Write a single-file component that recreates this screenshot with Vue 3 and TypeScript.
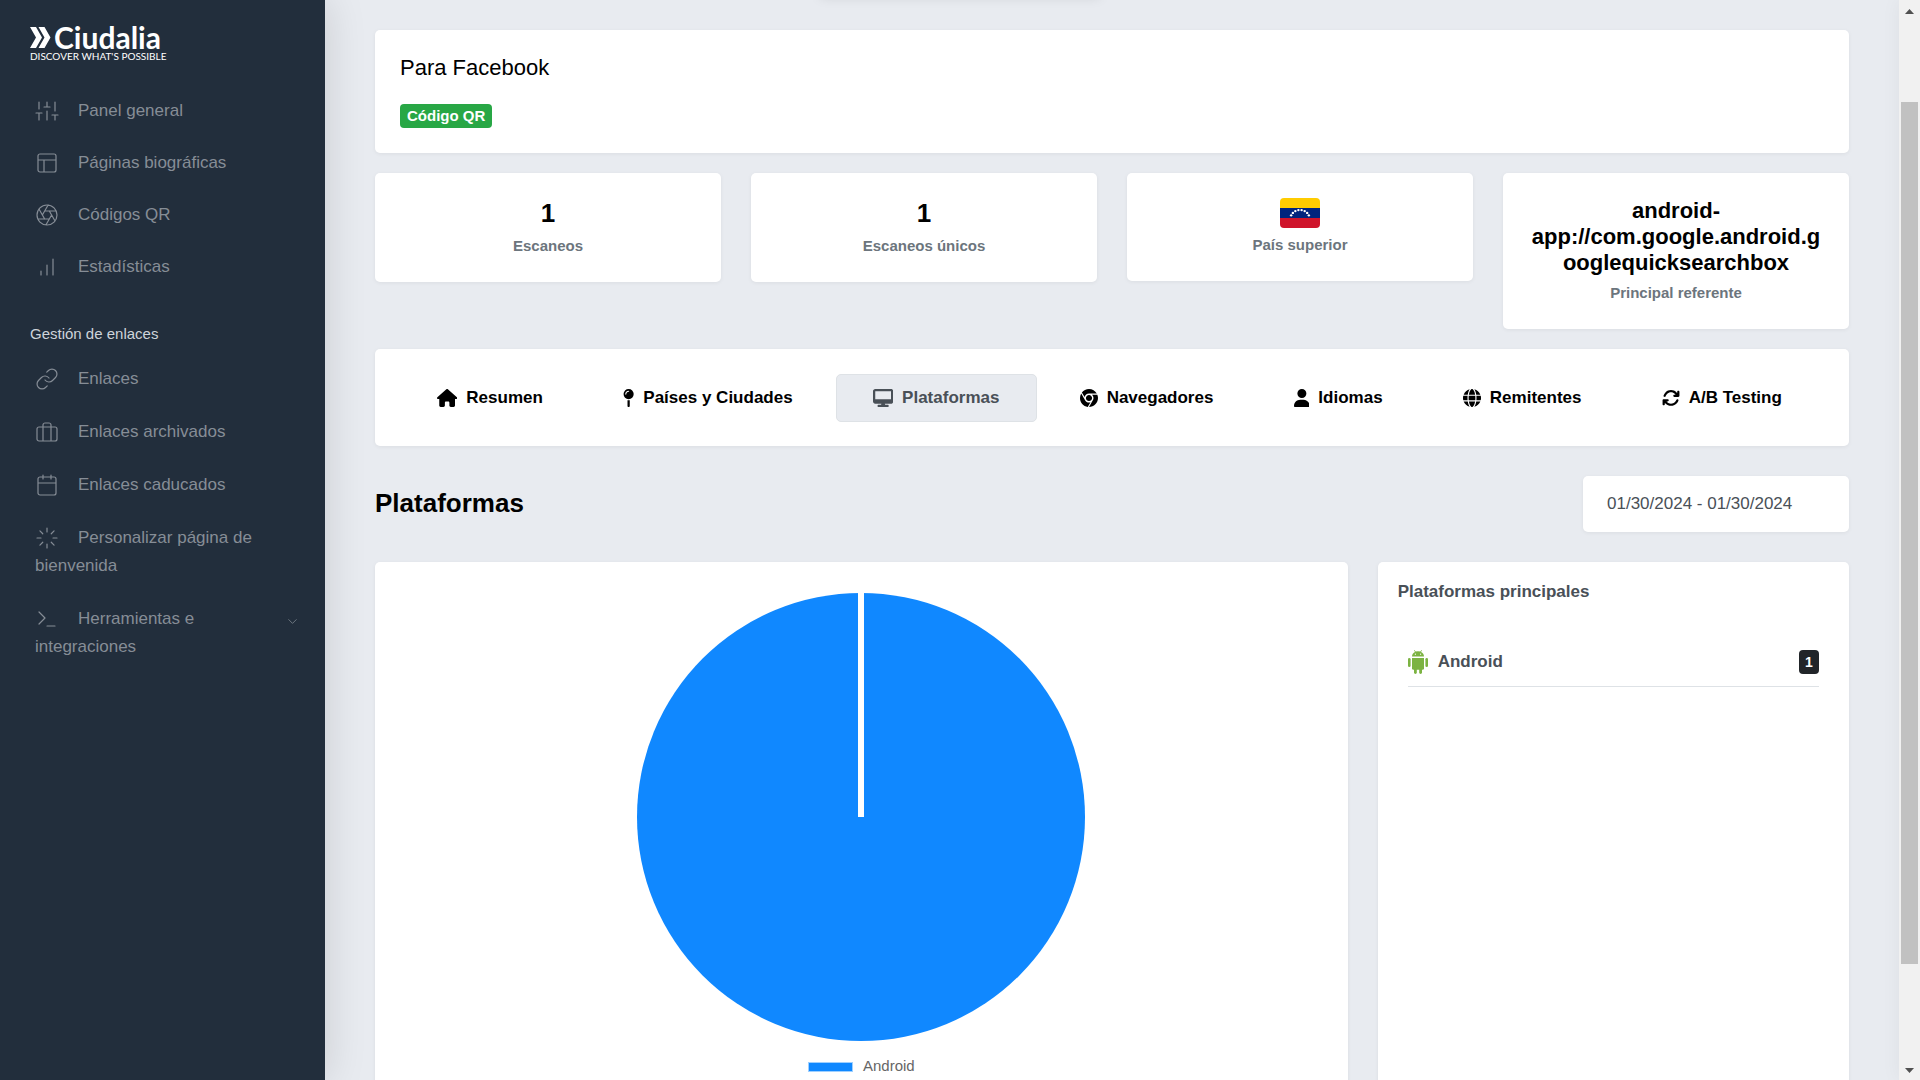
<script setup lang="ts">
import { ref } from 'vue'

interface NavLink {
  label: string
  icon: string
  expandable?: boolean
}

interface Tab {
  id: string
  label: string
  width: number
  path: string
}

const mainLinks: NavLink[] = [
  { label: 'Panel general', icon: 'M4 21v-7M4 10V3M12 21v-9M12 8V3M20 21v-5M20 12V3M1 14h6M9 8h6M17 16h6' },
  { label: 'Páginas biográficas', icon: 'M5 3h14a2 2 0 0 1 2 2v14a2 2 0 0 1-2 2H5a2 2 0 0 1-2-2V5a2 2 0 0 1 2-2zM3 9h18M9 21V9' },
  { label: 'Códigos QR', icon: 'M12 2a10 10 0 1 0 0 20 10 10 0 0 0 0-20zM14.31 8l5.74 9.94M9.69 8h11.48M7.38 12l5.74-9.94M9.69 16L3.95 6.06M14.31 16H2.83M16.62 12l-5.74 9.94' },
  { label: 'Estadísticas', icon: 'M12 20V10M18 20V4M6 20v-4' },
]

const manageLinks: NavLink[] = [
  { label: 'Enlaces', icon: 'M10 13a5 5 0 0 0 7.54.54l3-3a5 5 0 0 0-7.07-7.07l-1.72 1.71M14 11a5 5 0 0 0-7.54-.54l-3 3a5 5 0 0 0 7.07 7.07l1.71-1.71' },
  { label: 'Enlaces archivados', icon: 'M4 7h16a2 2 0 0 1 2 2v10a2 2 0 0 1-2 2H4a2 2 0 0 1-2-2V9a2 2 0 0 1 2-2zM16 21V5a2 2 0 0 0-2-2h-4a2 2 0 0 0-2 2v16' },
  { label: 'Enlaces caducados', icon: 'M5 4h14a2 2 0 0 1 2 2v14a2 2 0 0 1-2 2H5a2 2 0 0 1-2-2V6a2 2 0 0 1 2-2zM16 2v4M8 2v4M3 10h18' },
  { label: 'Personalizar página de bienvenida', icon: 'M12 2v4M12 18v4M4.93 4.93l2.83 2.83M16.24 16.24l2.83 2.83M2 12h4M18 12h4M4.93 19.07l2.83-2.83M16.24 7.76l2.83-2.83' },
  { label: 'Herramientas e integraciones', icon: 'M4 17l6-6-6-6M12 19h8', expandable: true },
]

const tabs: Tab[] = [
  { id: 'summary', label: 'Resumen', width: 576, path: 'M575.8 255.5c0 18-15 32.1-32 32.1h-32l.7 160.2c0 2.7-.2 5.4-.5 8.1V472c0 22.1-17.9 40-40 40H392c-22.1 0-40-17.9-40-40V384c0-17.7-14.3-32-32-32H256c-17.7 0-32 14.3-32 32v88c0 22.1-17.9 40-40 40H104c-22.1 0-40-17.9-40-40V287.6H32c-18 0-32-14-32-32.1c0-9 3-17 10-24L266.4 8c7-7 15-8 22-8s15 2 21 7L564.8 231.5c8 7 12 15 11 24z' },
  { id: 'places', label: 'Países y Ciudades', width: 320, path: 'M16 144a144 144 0 1 1 288 0A144 144 0 1 1 16 144zM160 80c8.8 0 16-7.2 16-16s-7.2-16-16-16c-53 0-96 43-96 96c0 8.8 7.2 16 16 16s16-7.2 16-16c0-35.3 28.7-64 64-64zM128 480V317.1c10.4 1.9 21.1 2.9 32 2.9s21.6-1 32-2.9V480c0 17.7-14.3 32-32 32s-32-14.3-32-32z' },
  { id: 'platforms', label: 'Plataformas', width: 576, path: 'M64 0C28.7 0 0 28.7 0 64V352c0 35.3 28.7 64 64 64H240l-10.7 32H160c-17.7 0-32 14.3-32 32s14.3 32 32 32H416c17.7 0 32-14.3 32-32s-14.3-32-32-32H346.7L336 416H512c35.3 0 64-28.7 64-64V64c0-35.3-28.7-64-64-64H64zM512 64V288H64V64H512z' },
  { id: 'browsers', label: 'Navegadores', width: 512, path: 'M0 256C0 209.4 12.47 165.6 34.27 127.1L144.1 318.3C166 357.5 207.9 384 256 384C270.3 384 283.1 381.7 296.8 377.4L220.5 509.6C95.9 492.3 0 385.3 0 256zM365.1 321.6C377.4 302.4 384 279.1 384 256C384 217.8 367.2 183.5 340.7 160H493.4C505.4 189.6 512 222.1 512 256C512 397.4 397.4 511.1 256 512L365.1 321.6zM477.8 128H256C193.1 128 142.3 172.1 130.5 230.7L54.19 98.47C101 38.53 174 0 256 0C350.8 0 433.5 51.48 477.8 128V128zM168 256C168 207.4 207.4 168 256 168C304.6 168 344 207.4 344 256C344 304.6 304.6 344 256 344C207.4 344 168 304.6 168 256z' },
  { id: 'languages', label: 'Idiomas', width: 448, path: 'M224 256A128 128 0 1 0 224 0a128 128 0 1 0 0 256zm-45.7 48C79.8 304 0 383.8 0 482.3C0 498.7 13.3 512 29.7 512H418.3c16.4 0 29.7-13.3 29.7-29.7C448 383.8 368.2 304 269.7 304H178.3z' },
  { id: 'referrers', label: 'Remitentes', width: 512, path: 'M352 256c0 22.2-1.2 43.6-3.3 64H163.3c-2.2-20.4-3.3-41.8-3.3-64s1.2-43.6 3.3-64H348.7c2.2 20.4 3.3 41.8 3.3 64zm28.8-64H503.9c5.3 20.5 8.1 41.9 8.1 64s-2.8 43.5-8.1 64H380.8c2.1-20.6 3.2-42 3.2-64s-1.1-43.4-3.2-64zm112.6-32H376.7c-10-63.9-29.8-117.4-55.3-151.6c78.3 20.7 142 77.5 171.9 151.6zm-149.1 0H167.7c6.1-36.4 15.5-68.6 27-94.7c10.5-23.6 22.2-40.7 33.5-51.5C239.4 3.2 248.7 0 256 0s16.6 3.2 27.8 13.8c11.3 10.8 23 27.9 33.5 51.5c11.6 26 20.9 58.2 27 94.7zm-209 0H18.6C48.6 85.9 112.2 29.1 190.6 8.4C165.1 42.6 145.3 96.1 135.3 160zM8.1 192H131.2c-2.1 20.6-3.2 42-3.2 64s1.1 43.4 3.2 64H8.1C2.8 299.5 0 278.1 0 256s2.8-43.5 8.1-64zM194.7 446.6c-11.6-26-20.9-58.2-27-94.6H344.3c-6.1 36.4-15.5 68.6-27 94.6c-10.5 23.6-22.2 40.7-33.5 51.5C272.6 508.8 263.3 512 256 512s-16.6-3.2-27.8-13.8c-11.3-10.8-23-27.9-33.5-51.5zM135.3 352c10 63.9 29.8 117.4 55.3 151.6C112.2 482.9 48.6 426.1 18.6 352H135.3zm358.1 0c-30 74.1-93.6 130.9-171.9 151.6c25.5-34.2 45.2-87.7 55.3-151.6H493.4z' },
  { id: 'ab', label: 'A/B Testing', width: 512, path: 'M105.1 202.6c7.7-21.8 20.2-42.3 37.8-59.8c62.5-62.5 163.8-62.5 226.3 0L386.3 160H352c-17.7 0-32 14.3-32 32s14.3 32 32 32H463.9c17.7 0 32-14.3 32-32V80c0-17.7-14.3-32-32-32s-32 14.3-32 32v35.2L414.4 97.6c-87.5-87.5-229.3-87.5-316.8 0C73.2 122 55.6 150.7 44.8 181.4c-5.9 16.7 2.9 34.9 19.5 40.8s34.9-2.9 40.8-19.5zM39 289.3c-5 1.5-9.8 4.2-13.7 8.2c-4 4-6.7 8.8-8.1 14c-.3 1.2-.6 2.5-.8 3.8c-.3 1.7-.4 3.4-.4 5.1V432c0 17.7 14.3 32 32 32s32-14.3 32-32V396.9l17.6 17.5c87.5 87.4 229.3 87.4 316.7 0c24.4-24.4 42.1-53.1 52.9-83.7c5.9-16.7-2.9-34.9-19.5-40.8s-34.9 2.9-40.8 19.5c-7.7 21.8-20.2 42.3-37.8 59.8c-62.5 62.5-163.8 62.5-226.3 0L125.6 352H160c17.7 0 32-14.3 32-32s-14.3-32-32-32H48.4c-1.6 0-3.2 .1-4.8 .3s-3.1 .5-4.6 1z' },
]

const activeTab = ref('platforms')
const dateRange = ref('01/30/2024 - 01/30/2024')

// Arc of eight stars on the flag's middle band
const stars = Array.from({ length: 8 }, (_, i) => {
  const angle = Math.PI * (0.12 + (0.76 * i) / 7)
  return { x: 20 - 9.5 * Math.cos(angle), y: 20.5 - 8.5 * Math.sin(angle) }
})
</script>

<template>
  <div class="shell">
    <div class="top-bar"></div>

    <nav class="sidebar">
      <a class="brand" href="#">
        <span class="brand-name">
          <svg width="21" height="21" viewBox="0 0 21 21" aria-hidden="true">
            <path d="M0 0h6l6 10.500-6 10.500H0l6-10.500z" fill="#fff" />
            <path d="M8.500 0h6L20.500 10.500l-6 10.500h-6l6-10.500z" fill="#fff" />
          </svg>
          <span>Ciudalia</span>
        </span>
        <span class="brand-tagline">DISCOVER WHAT'S POSSIBLE</span>
      </a>

      <ul class="nav-list">
        <li v-for="link in mainLinks" :key="link.label">
          <a class="nav-link" href="#">
            <span>
              <svg class="nav-icon" viewBox="0 0 24 24" aria-hidden="true"><path :d="link.icon" /></svg>{{ link.label }}
            </span>
          </a>
        </li>
      </ul>

      <h2 class="nav-heading">Gestión de enlaces</h2>

      <ul class="nav-list nav-list-spaced">
        <li v-for="link in manageLinks" :key="link.label">
          <a class="nav-link" href="#">
            <span>
              <svg class="nav-icon" viewBox="0 0 24 24" aria-hidden="true"><path :d="link.icon" /></svg>{{ link.label }}
            </span>
            <svg v-if="link.expandable" class="chevron" viewBox="0 0 24 24" aria-hidden="true"><path d="M6 9l6 6 6-6" /></svg>
          </a>
        </li>
      </ul>
    </nav>

    <main class="content">
      <section class="card intro">
        <h1 class="intro-title">Para Facebook</h1>
        <span class="badge badge-success">Código QR</span>
      </section>

      <section class="stats">
        <div class="card stat">
          <strong class="stat-number">1</strong>
          <span class="stat-label">Escaneos</span>
        </div>
        <div class="card stat">
          <strong class="stat-number">1</strong>
          <span class="stat-label">Escaneos únicos</span>
        </div>
        <div class="card stat">
          <svg class="flag" viewBox="0 0 40 30" role="img" aria-label="Venezuela">
            <rect width="40" height="10" fill="#fc0" />
            <rect y="10" width="40" height="10" fill="#00247d" />
            <rect y="20" width="40" height="10" fill="#cf142b" />
            <circle v-for="(star, i) in stars" :key="i" :cx="star.x" :cy="star.y" r="1.200" fill="#fff" />
          </svg>
          <span class="stat-label">País superior</span>
        </div>
        <div class="card stat">
          <strong class="stat-text">android-app://com.google.android.googlequicksearchbox</strong>
          <span class="stat-label">Principal referente</span>
        </div>
      </section>

      <div class="card tabs" role="tablist">
        <button
          v-for="tab in tabs"
          :key="tab.id"
          class="tab"
          :class="{ active: tab.id === activeTab }"
          type="button"
          role="tab"
          :aria-selected="tab.id === activeTab"
          @click="activeTab = tab.id"
        >
          <svg class="tab-icon" :viewBox="`0 0 ${tab.width} 512`" aria-hidden="true"><path :d="tab.path" /></svg>
          {{ tab.label }}
        </button>
      </div>

      <div class="section-head">
        <h2 class="section-title">Plataformas</h2>
        <input v-model="dateRange" class="date-range" type="text" aria-label="Rango de fechas" />
      </div>

      <section class="panels">
        <div class="card chart-card">
          <svg class="pie" viewBox="0 0 448 448" role="img" aria-label="Android: 1">
            <circle cx="224" cy="224" r="224" fill="#1088ff" />
            <rect x="221" y="0" width="6" height="224" fill="#fff" />
          </svg>
          <div class="legend"><span class="legend-swatch"></span>Android</div>
        </div>

        <div class="card top-card">
          <h3 class="top-title">Plataformas principales</h3>
          <ul class="top-list">
            <li class="top-item">
              <svg class="android" viewBox="0 0 20 24" aria-hidden="true">
                <g fill="#7cb342">
                  <path d="M4 6.500C4 4.300 5.200 2.700 7 1.900L6 .300l.5-.3 1.100 1.600a7 7 0 0 1 4.800 0L13.500 0l.5.300-1 1.600c1.800.8 3 2.400 3 4.600z" />
                  <path d="M4 8h12v10.200a1.500 1.500 0 0 1-1.500 1.500h-9A1.500 1.500 0 0 1 4 18.200z" />
                  <rect x="0" y="8" width="2.600" height="9" rx="1.300" />
                  <rect x="17.400" y="8" width="2.600" height="9" rx="1.300" />
                  <rect x="6" y="16" width="2.800" height="8" rx="1.400" />
                  <rect x="11.200" y="16" width="2.800" height="8" rx="1.400" />
                </g>
                <circle cx="7.400" cy="4.200" r=".6" fill="#fff" />
                <circle cx="12.600" cy="4.200" r=".6" fill="#fff" />
              </svg>
              <span class="top-name">Android</span>
              <span class="badge badge-dark">1</span>
            </li>
          </ul>
        </div>
      </section>
    </main>

    <div class="scrollbar" aria-hidden="true">
      <svg class="scroll-arrow" width="9" height="5" viewBox="0 0 9 5"><path d="M0 5L4.500 0 9 5z" /></svg>
      <span class="scroll-thumb"></span>
      <svg class="scroll-arrow" width="9" height="5" viewBox="0 0 9 5"><path d="M0 0h9L4.500 5z" /></svg>
    </div>
  </div>
</template>

<style>
body {
  margin: 0;
  overflow: hidden;
}
</style>

<style scoped>
.shell {
  display: grid;
  grid-template-rows: 100%;
  grid-template-columns: 325px minmax(0, 1fr) 21px;
  height: 100vh;
  overflow: hidden;
  background: #e8ebf0;
  color: #495057;
  font: 17px/28px "Liberation Sans", Arial, sans-serif;
}

.shell *,
.shell *::before {
  box-sizing: border-box;
}

h1,
h2,
h3,
ul {
  margin: 0;
  padding: 0;
}

ul {
  list-style: none;
}

/* Floating bar tucked above the window's edge; only its shadow shows */
.top-bar {
  position: fixed;
  top: -12px;
  left: 50%;
  width: 280px;
  height: 10px;
  transform: translateX(-50%);
  box-shadow: 0 0 12px rgba(0, 0, 0, 0.1);
}

.sidebar {
  background: #222e3c;
  box-shadow: 0 0 40px rgba(0, 0, 0, 0.14);
}

.brand {
  display: flex;
  flex-direction: column;
  padding: 24px 30px 23px;
  color: #fff;
  text-decoration: none;
}

.brand-name {
  display: flex;
  align-items: center;
  gap: 3px;
  height: 26px;
  font: 700 30px/26px Lato, sans-serif;
}

.brand-tagline {
  font: 10px/12px Lato, sans-serif;
}

.nav-list {
  display: flex;
  flex-direction: column;
}

.nav-list-spaced {
  gap: 1px;
}

.nav-link {
  display: flex;
  align-items: center;
  justify-content: space-between;
  padding: 12px 25px 12px 35px;
  color: #868d96;
  text-decoration: none;
}

.nav-link > span {
  max-width: 236px;
}

.nav-icon {
  width: 24px;
  height: 24px;
  margin-right: 19px;
  vertical-align: -7px;
}

.nav-icon,
.chevron {
  fill: none;
  stroke: currentColor;
  stroke-width: 1.200;
  stroke-linecap: round;
  stroke-linejoin: round;
}

.chevron {
  flex: none;
  width: 15px;
  height: 15px;
  margin-bottom: 24px;
}

.nav-heading {
  padding: 31px 30px 9px;
  color: #ced4da;
  font-size: 15px;
  font-weight: 400;
  line-height: 20px;
}

.content {
  display: flex;
  flex-direction: column;
  min-width: 0;
  padding: 30px 50px 0;
}

.card {
  border-radius: 5px;
  background: #fff;
  box-shadow: 0 1px 4px rgba(0, 0, 0, 0.06);
}

.intro {
  display: flex;
  flex-direction: column;
  align-items: flex-start;
  gap: 23px;
  padding: 25px;
}

.intro-title {
  color: #000;
  font-size: 22px;
  font-weight: 400;
  line-height: 26px;
}

.badge {
  border-radius: 4px;
  color: #fff;
  font-size: 15px;
  font-weight: 700;
  line-height: 24px;
}

.badge-success {
  padding: 0 7px;
  background: #28a745;
}

.badge-dark {
  width: 20px;
  background: #212529;
  font-size: 14px;
  text-align: center;
}

.stats {
  display: grid;
  grid-template-columns: repeat(4, minmax(0, 1fr));
  align-items: start;
  gap: 30px;
  margin-top: 20px;
}

.stat {
  display: flex;
  flex-direction: column;
  align-items: center;
  gap: 5px;
  padding: 25px;
  color: #000;
  text-align: center;
}

.stat-number {
  font-size: 26px;
  line-height: 31px;
}

.stat-text {
  font-size: 22px;
  line-height: 26px;
  overflow-wrap: anywhere;
}

.stat-label {
  color: #6c757d;
  font-size: 15px;
  font-weight: 700;
  line-height: 23px;
}

.flag {
  width: 40px;
  height: 30px;
  border-radius: 4px;
}

.tabs {
  display: flex;
  gap: 6px;
  margin-top: 20px;
  padding: 25px 30px 24px 25px;
}

.tab {
  display: flex;
  flex: 1 1 auto;
  align-items: center;
  justify-content: center;
  gap: 9px;
  height: 48px;
  padding: 0;
  border: 1px solid transparent;
  border-radius: 5px;
  background: none;
  color: #000;
  font: inherit;
  font-weight: 700;
}

.tab.active {
  border-color: #dee2e6;
  background: #e8ebf0;
  color: #495057;
}

.tab-icon {
  height: 18px;
  fill: currentColor;
}

.section-head {
  display: flex;
  align-items: center;
  justify-content: space-between;
  margin: 30px 0;
}

.section-title {
  padding-bottom: 2px;
  color: #000;
  font-size: 26px;
  line-height: 32px;
}

.date-range {
  width: 266px;
  height: 56px;
  padding: 0 24px;
  border: 0;
  border-radius: 5px;
  background: #fff;
  box-shadow: 0 1px 4px rgba(0, 0, 0, 0.06);
  color: #495057;
  font: inherit;
}

.panels {
  display: grid;
  grid-template-columns: repeat(12, minmax(0, 1fr));
  gap: 30px;
}

.chart-card {
  display: flex;
  grid-column: span 8;
  flex-direction: column;
  align-items: center;
  padding: 31px 30px;
}

.pie {
  width: 448px;
  height: 448px;
}

.legend {
  display: flex;
  align-items: center;
  gap: 10px;
  margin-top: 15px;
  color: #666;
  font-size: 15px;
  line-height: 20px;
}

.legend-swatch {
  width: 45px;
  height: 10px;
  margin-top: 2px;
  border: 1px solid #9fd0ff;
  background: #1088ff;
}

.top-card {
  grid-column: span 4;
  padding: 16px 20px;
}

.top-title {
  font-size: 17px;
  line-height: 28px;
}

.top-list {
  padding: 30px 10px;
}

.top-item {
  display: flex;
  align-items: center;
  gap: 10px;
  padding: 12px 0 10px;
  border-bottom: 1px solid #dee2e6;
}

.android {
  width: 20px;
  height: 24px;
}

.top-name {
  flex: 1;
  font-weight: 700;
}

.scrollbar {
  display: grid;
  grid-template-rows: 14px 88fr 862fr 104fr 12px;
  justify-items: center;
  background: #f1f1f1;
  box-shadow: 0 0 20px rgba(0, 0, 0, 0.05);
}

.scroll-arrow {
  grid-row: 1;
  align-self: end;
  fill: #505050;
}

.scroll-arrow:last-child {
  grid-row: 5;
  align-self: start;
}

.scroll-thumb {
  grid-row: 3;
  width: 17px;
  background: #c1c1c1;
}
</style>
